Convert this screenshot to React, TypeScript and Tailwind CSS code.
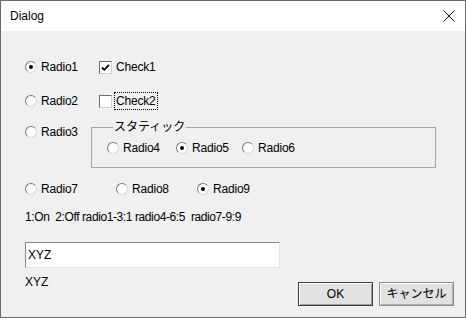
import React from 'react';

const font = { fontFamily: '"Liberation Sans", "Noto Sans CJK JP", sans-serif' };

const Radio: React.FC<{ label: string; checked?: boolean; className?: string }> = ({ label, checked, className }) => (
  <div className={`flex items-center h-[20px] ${className ?? ''}`}>
    <span className="w-[12px] h-[12px] rounded-full bg-white border border-t-[#7a7a7a] border-l-[#7a7a7a] border-b-[#d8d8d8] border-r-[#d8d8d8] flex items-center justify-center shrink-0">
      {checked && <span className="w-[4px] h-[4px] rounded-full bg-black" />}
    </span>
    <span className="ml-[4px] text-[12px] leading-[14px] tracking-[-0.2px] text-black">{label}</span>
  </div>
);

const Check: React.FC<{ label: string; checked?: boolean; focused?: boolean }> = ({ label, checked, focused }) => (
  <div className="flex items-center h-[20px]">
    <span className="w-[13px] h-[13px] bg-white border border-t-[#6e6e6e] border-l-[#6e6e6e] border-b-[#cfcfcf] border-r-[#cfcfcf] shrink-0 flex items-center justify-center">
      {checked && (
        <svg width="9" height="9" viewBox="0 0 9 9">
          <path d="M1 4.5 L3.3 6.8 L8 1.8" stroke="#000" strokeWidth="1.8" fill="none" />
        </svg>
      )}
    </span>
    <span
      className={`ml-[4px] text-[12px] leading-[14px] tracking-[-0.2px] text-black ${focused ? 'outline-1 outline-dotted outline-black outline-offset-[1px]' : ''}`}
    >
      {label}
    </span>
  </div>
);

export default function App() {
  return (
    <div className="w-[466px] h-[318px] border border-[#6b6b6b] flex flex-col bg-[#f0f0f0]" style={font}>
      <div className="h-[30px] bg-white flex items-center justify-between pl-[9px] pr-[10px] shrink-0">
        <span className="text-[12px] text-black">Dialog</span>
        <svg width="12" height="12" viewBox="0 0 12 12">
          <path d="M0.5 0.5 L11.5 11.5 M11.5 0.5 L0.5 11.5" stroke="#111" strokeWidth="1" />
        </svg>
      </div>

      <div className="flex-1 flex flex-col pl-[24px] pr-[11px] pt-[26px]">
        <div className="flex">
          <Radio label="Radio1" checked className="w-[74px]" />
          <Check label="Check1" checked />
        </div>

        <div className="flex mt-[14px]">
          <Radio label="Radio2" className="w-[74px]" />
          <Check label="Check2" focused />
        </div>

        <div className="flex items-start mt-[10px]">
          <Radio label="Radio3" className="w-[66px] mt-[1px]" />
          <fieldset className="w-[345px] h-[47px] border border-[#a8a8a8] pl-[15px]">
            <legend className="text-[12px] leading-[12px] ml-[6px] px-[1px] text-black">スタティック</legend>
            <div className="flex mt-[5px]">
              <Radio label="Radio4" className="w-[69px]" />
              <Radio label="Radio5" checked className="w-[66px]" />
              <Radio label="Radio6" />
            </div>
          </fieldset>
        </div>

        <div className="flex mt-[11px]">
          <Radio label="Radio7" className="w-[91px]" />
          <Radio label="Radio8" className="w-[81px]" />
          <Radio label="Radio9" checked />
        </div>

        <div className="mt-[10px] h-[16px] flex items-center text-[12px] tracking-[-0.4px] whitespace-pre text-black">
          1:On  2:Off radio1-3:1 radio4-6:5  radio7-9:9
        </div>

        <div className="mt-[17px] w-[255px] h-[26px] bg-white border border-t-[#8a8a8a] border-l-[#8a8a8a] border-b-[#e3e3e3] border-r-[#e3e3e3] flex items-center px-[2px] text-[12px] text-black">
          XYZ
        </div>

        <div className="mt-[6px] flex justify-between items-start">
          <span className="text-[12px] leading-[16px] text-black">XYZ</span>
          <div className="flex gap-[6px] mt-[8px]">
            <button className="w-[75px] h-[24px] bg-[#e1e1e1] border border-[#3c3c3c] shadow-[inset_1px_1px_0_#ffffff,inset_-1px_-1px_0_#a0a0a0] text-[12px] text-black">
              OK
            </button>
            <button className="w-[75px] h-[24px] bg-[#e1e1e1] border border-[#8a8a8a] shadow-[inset_1px_1px_0_#ffffff,inset_-1px_-1px_0_#b0b0b0] text-[12px] text-black">
              キャンセル
            </button>
          </div>
        </div>
      </div>
    </div>
  );
}
